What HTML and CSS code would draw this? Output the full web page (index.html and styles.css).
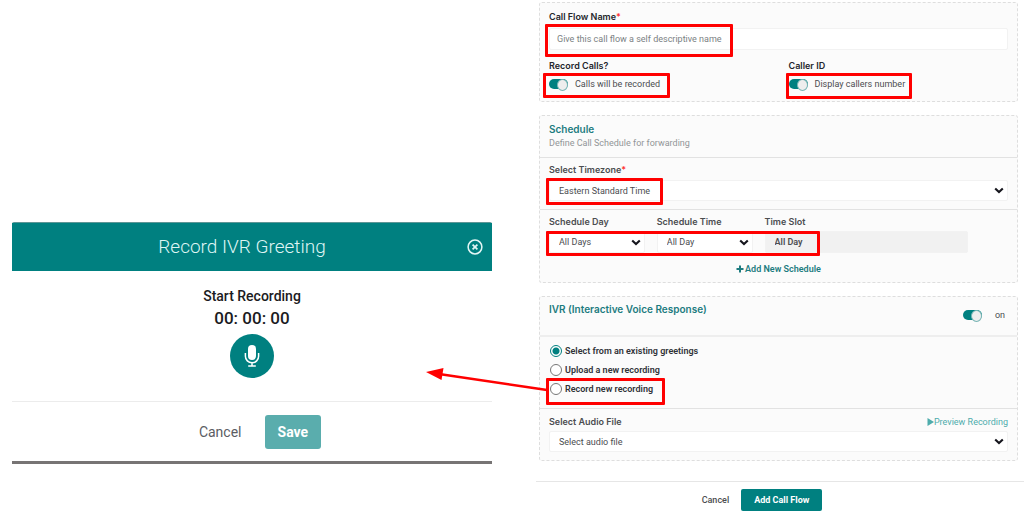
FILE: index.html
```html
<!DOCTYPE html>
<html lang="en">
<head>
<meta charset="utf-8">
<title>Call Flow</title>
<link rel="stylesheet" href="styles.css">
</head>
<body>
<svg class="defs" aria-hidden="true">
  <symbol id="chevron" viewBox="0 0 10 7"><path d="M1.2 1.4 5 5 8.8 1.4" fill="none" stroke="#16161d" stroke-width="2.1"/></symbol>
</svg>
<main class="page">
  <section class="modal" role="dialog" aria-labelledby="modal-title">
    <header class="modal-head">
      <h1 id="modal-title" class="modal-title">Record IVR Greeting</h1>
      <button class="close" type="button" aria-label="Close">
        <svg width="16" height="16" viewBox="0 0 16 16" fill="none" stroke="#e3f6f5"><circle cx="8" cy="8" r="6.9" stroke-width="1.5"/><path d="M5.6 5.6l4.800 4.800M10.400 5.600l-4.800 4.800" stroke-width="1.7"/></svg>
      </button>
    </header>
    <div class="modal-body">
      <p class="start">Start Recording</p>
      <p class="timer">00: 00: 00</p>
      <button class="mic" type="button" aria-label="Start recording">
        <svg width="16" height="24" viewBox="0 0 16 24"><rect x="4" y="1" width="8" height="15" rx="4" fill="#fff"/><path d="M1.4 9v3.2a6.6 6.6 0 0 0 13.2 0V9M8 18.8v3M4.2 22h7.6" fill="none" stroke="#fff" stroke-width="1.5"/></svg>
      </button>
    </div>
    <footer class="modal-foot">
      <button class="modal-cancel" type="button">Cancel</button>
      <button class="save" type="button">Save</button>
    </footer>
  </section>

  <form class="form">
    <section class="card intro">
      <label class="label dark" for="name">Call Flow Name<span class="req">*</span></label>
      <div class="marked"><input id="name" class="field" type="text" placeholder="Give this call flow a self descriptive name"><span class="mark mark-name"></span></div>
      <div class="options">
        <div>
          <p class="label dark">Record Calls?</p>
          <div class="marked"><label class="toggle"><input class="switch" type="checkbox" checked>Calls will be recorded</label><span class="mark mark-record"></span></div>
        </div>
        <div>
          <p class="label dark">Caller ID</p>
          <div class="marked"><label class="toggle"><input class="switch" type="checkbox" checked>Display callers number</label><span class="mark mark-caller"></span></div>
        </div>
      </div>
    </section>

    <section class="card">
      <header class="section head">
        <h2 class="heading">Schedule</h2>
        <p class="sub">Define Call Schedule for forwarding</p>
      </header>
      <div class="section zone">
        <label class="label" for="zone">Select Timezone<span class="req">*</span></label>
        <div class="pick marked">
          <select id="zone" class="field"><option>Eastern Standard Time</option></select>
          <svg class="chevron" width="10" height="7"><use href="#chevron"/></svg>
          <span class="mark mark-zone"></span>
        </div>
      </div>
      <div class="section slots">
        <div class="slot-grid marked">
          <label class="label" for="day">Schedule Day</label>
          <label class="label" for="time">Schedule Time</label>
          <label class="label" for="slot">Time Slot</label>
          <div class="pick"><select id="day" class="field"><option>All Days</option></select><svg class="chevron" width="10" height="7"><use href="#chevron"/></svg></div>
          <div class="pick"><select id="time" class="field"><option>All Day</option></select><svg class="chevron" width="10" height="7"><use href="#chevron"/></svg></div>
          <input id="slot" class="field slot" type="text" value="All Day" readonly>
          <span class="mark mark-slots"></span>
        </div>
        <button class="add" type="button"><svg width="8" height="8" viewBox="0 0 8 8"><path d="M4 .5v7M.5 4h7" stroke="#1d7c80" stroke-width="2"/></svg>Add New Schedule</button>
      </div>
    </section>

    <section class="card">
      <header class="section ivr-head">
        <h2 class="heading">IVR (Interactive Voice Response)</h2>
        <label class="toggle ivr-toggle"><input class="switch" type="checkbox" checked>on</label>
      </header>
      <div class="section radios">
        <label class="choice"><input class="radio" type="radio" name="source" checked>Select from an existing greetings</label>
        <label class="choice"><input class="radio" type="radio" name="source">Upload a new recording</label>
        <div class="marked">
          <label class="choice"><input class="radio" type="radio" name="source">Record new recording</label>
          <span class="mark mark-new"></span>
          <svg class="arrow" width="124" height="30" viewBox="0 0 124 30" aria-hidden="true"><path d="M14 10 122 26" stroke="#f00" stroke-width="2.6"/><path d="M1 8 18.500 4 16.500 16z" fill="#f00"/></svg>
        </div>
      </div>
      <div class="section audio">
        <div class="audio-top">
          <label class="label" for="audio">Select Audio File</label>
          <a class="preview" href="#"><svg width="7" height="8" viewBox="0 0 7 8"><path d="M.5 0 7 4 .5 8z" fill="#4eacac"/></svg>Preview Recording</a>
        </div>
        <div class="pick">
          <select id="audio" class="field"><option>Select audio file</option></select>
          <svg class="chevron" width="10" height="7"><use href="#chevron"/></svg>
        </div>
      </div>
    </section>

    <footer class="actions">
      <button class="cancel" type="button">Cancel</button>
      <button class="submit" type="submit">Add Call Flow</button>
    </footer>
  </form>
</main>
</body>
</html>
```
FILE: styles.css
```css
* { box-sizing: border-box; }
body { margin: 0; background: #fff; color: #4b4d50; font: 9px/12px Roboto, sans-serif; }
h1, h2, p { margin: 0; font-size: inherit; font-weight: inherit; }
button, input, select { font: inherit; color: inherit; margin: 0; }
button { border: 0; padding: 0; background: none; cursor: pointer; }
.defs { position: absolute; width: 0; height: 0; }

.page { display: grid; grid-template-columns: 480fr 488fr; column-gap: 44px; align-items: start; padding: 2px 0 0 12px; }

.modal { margin-top: 220px; border-top: 1px solid #5e9696; border-bottom: 3px solid #777474; border-radius: 2px 2px 0 0; }
.modal-head { display: grid; grid-template-columns: 14px 1fr 34px; align-items: center; height: 48px; background: #008080; }
.modal-title { grid-column: 2; text-align: center; color: #dff5f4; font-size: 19px; line-height: 24px; font-weight: 300; }
.close { display: grid; place-items: center; height: 24px; }
.modal-body { display: flex; flex-direction: column; align-items: center; padding: 15px 0 23px; color: #1b1b22; font-weight: 500; }
.start { font-size: 14px; line-height: 20px; }
.timer { font-size: 17px; line-height: 24px; }
.mic { display: grid; place-items: center; width: 44px; height: 44px; margin-top: 4px; border-radius: 50%; background: #008080; }
.modal-foot { display: flex; justify-content: center; align-items: center; gap: 23px; padding: 13px 0 12px 16px; border-top: 1px solid #ececec; font-size: 14px; line-height: 20px; }
.modal-cancel { color: #5b5d63; }
.save { padding: 7px 13px; border-radius: 3px; background: #5aadad; color: #fff; font-weight: 700; }

.form { display: flex; flex-direction: column; }
.card { margin: 0 6px 13px 3px; border: 1px dashed #dedede; border-radius: 3px; background: #fbfbfb; }
.intro { padding: 8px 9px 11px; }
.section { padding: 6px 9px 8px; }
.head { padding-top: 7px; }
.section + .section { border-top: 1px solid #e2e2e2; }
.label { display: block; font-family: Inter, sans-serif; font-weight: 600; }
.dark { color: #24262b; }
.req { color: #f33; }
.field { display: block; width: 100%; height: 22px; padding: 0 9px; border: 1px solid #f2f2f2; border-radius: 2px; background: #fff; outline: 0; appearance: none; }
.field::placeholder { color: #7b7f83; opacity: 1; }
.intro .field { margin-top: 5px; padding: 0 7px; }
.options { display: grid; grid-template-columns: 1fr 1fr; gap: 20px; margin-top: 10px; }
.toggle { display: flex; align-items: center; gap: 7px; }
.options .toggle { margin-top: 6px; }
.switch { appearance: none; display: flex; justify-content: flex-end; width: 19px; height: 10px; border-radius: 5px; background: #008080; }
.switch::before { content: ""; width: 9px; height: 10px; border: 1px solid #78b5b5; border-radius: 50%; background: #eee; }

.heading { color: #1d7c80; font-family: Inter, sans-serif; font-weight: 600; font-size: 10px; }
.sub { margin-top: 2px; color: #929698; }
.pick { display: grid; grid-template-columns: 1fr 14px; align-items: center; }
.pick .field { grid-area: 1 / 1 / 2 / 3; }
.chevron { grid-area: 1 / 2; pointer-events: none; }
.zone .pick { margin-top: 4px; }
.zone .field, .audio .field { height: 21px; }
.slot-grid { display: grid; grid-template-columns: 96fr 96fr 204fr 28fr; gap: 3px 12px; }
.slot-grid > :nth-child(3), .slot { grid-column: 3 / 4; }
.slot-grid > :nth-child(4) { grid-column: 1; }
.slot { background: #f1f1f1; font-weight: 600; }
.slots { padding-bottom: 7px; }
.add { display: flex; align-items: center; justify-content: center; gap: 1px; margin: 10px auto 0; color: #1d7c80; font-weight: 600; }

.ivr-head { display: flex; align-items: center; justify-content: space-between; height: 38px; }
.ivr-head .heading { align-self: flex-start; }
.ivr-toggle { gap: 13px; padding-right: 3px; }
.section.radios { padding: 4px 9px 10px; border-top: 2px solid #eee; }
.choice { display: flex; align-items: center; gap: 3px; height: 19px; color: #303238; font-weight: 600; }
.radio { appearance: none; width: 12px; height: 12px; margin-left: 1px; border: 1px solid #777; border-radius: 50%; background: #fff; }
.radio:checked { border-color: #008080; background: radial-gradient(circle, #008080 3px, #fff 4px); }
.audio { padding-top: 7px; }
.audio-top { display: flex; justify-content: space-between; margin-bottom: 3px; }
.preview { display: flex; align-items: center; color: #4eacac; text-decoration: none; }
.actions { display: flex; justify-content: center; gap: 12px; margin-top: 7px; padding: 7px 36px 0 0; border-top: 1px solid #e6e6e6; }
.cancel { font-weight: 500; }
.submit { height: 22px; padding: 0 13px; border-radius: 2px; background: #008080; color: #fff; font-weight: 700; }

/* Red callouts laid over the controls */
.marked { position: relative; }
.mark { position: absolute; border: 3px solid #f00; border-radius: 1px; pointer-events: none; }
.mark-name { left: -4px; top: -4px; width: 188px; height: 33px; }
.mark-record { left: -6px; top: -5px; width: 127px; height: 25px; }
.mark-caller { left: -3px; top: -5px; width: 126px; height: 26px; }
.mark-zone { left: -3px; top: -2px; width: 117px; height: 27px; }
.mark-slots { left: -3px; bottom: -3px; width: 274px; height: 25px; }
.mark-new { left: -3px; top: -1px; width: 119px; height: 27px; }
.arrow { position: absolute; left: -124px; top: -15px; pointer-events: none; }
```
